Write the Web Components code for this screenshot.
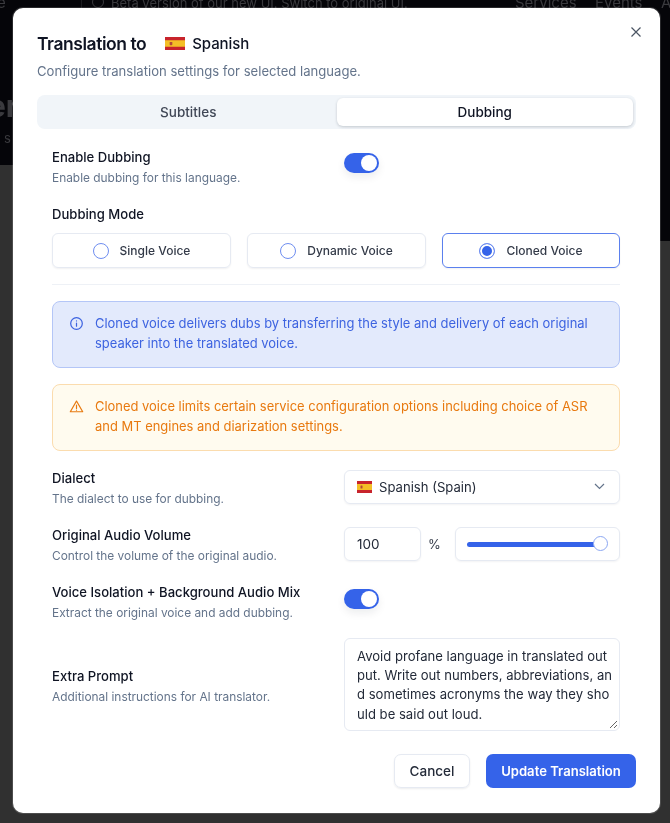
<!DOCTYPE html>
<html>
<head>
<meta charset="utf-8">
<title>Translation</title>
<style>
  html, body { margin: 0; height: 823px; overflow: hidden; background: #303030; }
  body { font-family: Inter, "Liberation Sans", sans-serif; padding: 7.5px 0 0 13px; box-sizing: border-box; }
</style>
</head>
<body>
<page-backdrop></page-backdrop>
<translation-modal>
  <span slot="lang">Spanish</span>
  <tab-switch></tab-switch>
  <form-row label="Enable Dubbing" desc="Enable dubbing for this language."><toggle-switch></toggle-switch></form-row>
  <mode-picker></mode-picker>
  <notice-box kind="info">Cloned voice delivers dubs by transferring the style and delivery of each original speaker into the translated voice.</notice-box>
  <notice-box kind="warn">Cloned voice limits certain service configuration options including choice of ASR and MT engines and diarization settings.</notice-box>
  <form-row label="Dialect" desc="The dialect to use for dubbing." style="margin-top:19px;--text-top:-.5px"><dialect-select></dialect-select></form-row>
  <form-row label="Original Audio Volume" desc="Control the volume of the original audio." style="margin-top:19.5px;--text-top:-.5px"><volume-control></volume-control></form-row>
  <form-row label="Voice Isolation + Background Audio Mix" desc="Extract the original voice and add dubbing." style="margin-top:19.5px;--text-top:-.5px"><toggle-switch></toggle-switch></form-row>
  <form-row label="Extra Prompt" desc="Additional instructions for AI translator." style="margin-top:16.5px;--text-top:29.5px"><prompt-box>Avoid profane language in translated output. Write out numbers, abbreviations, and sometimes acronyms the way they should be said out loud.</prompt-box></form-row>
  <modal-actions></modal-actions>
</translation-modal>

<script>
const flag = (w, h) => `<svg width="${w}" height="${h}" viewBox="0 0 30 20" preserveAspectRatio="none" style="display:block;flex:none">
  <rect width="30" height="20" fill="#c8242c"/><rect y="5" width="30" height="10" fill="#f4bf26"/>
  <rect x="7" y="7.5" width="4" height="5" rx="1" fill="#b5483a"/></svg>`;

class PageBackdrop extends HTMLElement {
  constructor() {
    super();
    this.attachShadow({ mode: "open" }).innerHTML = `
    <style>
      :host { position: fixed; inset: 0; display: block; overflow: hidden; background: #303030; }
      .top { position: absolute; left: 0; right: 0; top: 0; height: 165px; background: #050509; }
      .right { position: absolute; right: 0; top: 165px; width: 20px; height: 76px; background: #050509; }
      .line { position: absolute; left: 81px; top: 0; width: 1px; height: 8px; background: #1b1b1f; }
      .dot { position: absolute; left: 92px; top: -4px; width: 10px; height: 10px; border: 1px solid #3a3a3e; border-radius: 50%; }
      span { position: absolute; color: #3a3a3e; font: 400 13px/16px Inter, sans-serif; white-space: nowrap; filter: blur(.4px); }
      .nav { font-size: 15px; }
      .big { font: 700 30px/36px Inter, sans-serif; }
    </style>
    <div class="top"></div><div class="right"></div><div class="line"></div><div class="dot"></div>
    <span class="nav" style="left:-3px;top:-5px">e</span>
    <span style="left:111px;top:-5px">Beta version of our new UI. Switch to original UI.</span>
    <span class="nav" style="left:515px;top:-5px">Services</span>
    <span class="nav" style="left:595px;top:-5px">Events</span>
    <span class="nav" style="left:661px;top:-5px">A</span>
    <span class="big" style="left:-12px;top:88px">er</span>
    <span style="left:4px;top:130px">s</span>`;
  }
}

class TranslationModal extends HTMLElement {
  constructor() {
    super();
    this.attachShadow({ mode: "open" }).innerHTML = `
    <style>
      :host { position: relative; display: block; width: 647px; height: 805px; box-sizing: border-box;
        background: #fff; border-radius: 10px; padding: 24px 24px 0; color: #0f1423;
        box-shadow: 0 0 0 1px rgba(255,255,255,.14); }
      h2 { margin: 0; display: flex; align-items: center; height: 24px; font-size: 17.5px; font-weight: 600; letter-spacing: -.45px; }
      h2 svg { margin: 0 7px 0 19px; }
      h2 ::slotted(span) { font-size: 15px; font-weight: 500; letter-spacing: -.1px; }
      p { margin: 6.5px 0 15px; font-size: 13.1px; line-height: 18px; color: #64748b; }
      .x { position: absolute; right: 18px; top: 18.5px; width: 12px; height: 12px; }
    </style>
    <svg class="x" viewBox="0 0 12 12" fill="none" stroke="#4b5563" stroke-width="1.2"><path d="M1.5 1.5l9 9M10.5 1.5l-9 9"/></svg>
    <h2>Translation to ${flag(20, 13)}<slot name="lang"></slot></h2>
    <p>Configure translation settings for selected language.</p>
    <slot></slot>`;
  }
}

class TabSwitch extends HTMLElement {
  constructor() {
    super();
    this.attachShadow({ mode: "open" }).innerHTML = `
    <style>
      :host { display: grid; grid-template-columns: 1fr 1fr; height: 34px; box-sizing: border-box; padding: 3px; margin-bottom: 19px;
        background: #f1f5f9; border-radius: 8px; font-size: 13.5px; font-weight: 500; color: #404756; text-align: center; line-height: 28px; }
      .on { background: #fff; border-radius: 6px; color: #0f1423; box-shadow: 0 1px 3px rgba(15,23,42,.2); }
    </style>
    <div>Subtitles</div><div class="on">Dubbing</div>`;
  }
}

class FormRow extends HTMLElement {
  constructor() {
    super();
    this.attachShadow({ mode: "open" }).innerHTML = `
    <style>
      :host { display: grid; grid-template-columns: 292px 276px; align-items: start; margin-left: 15px; }
      .t { margin-top: var(--text-top, 0); }
      .l { font-size: 13.1px; font-weight: 500; line-height: 18px; color: #0f1423; white-space: nowrap; }
      .d { font-size: 11.9px; line-height: 16px; margin-top: 4px; color: #64748b; white-space: nowrap; }
    </style>
    <div class="t"><div class="l"></div><div class="d"></div></div>
    <slot></slot>`;
    this.shadowRoot.querySelector(".l").textContent = this.getAttribute("label");
    this.shadowRoot.querySelector(".d").textContent = this.getAttribute("desc");
  }
}

class ToggleSwitch extends HTMLElement {
  constructor() {
    super();
    this.attachShadow({ mode: "open" }).innerHTML = `
    <style>
      :host { display: block; width: 35px; height: 20px; margin-top: 5px; border-radius: 10px; background: #3563e9; position: relative;
        box-shadow: 0 4px 8px rgba(15,23,42,.08); }
      i { position: absolute; right: 2px; top: 2px; width: 16px; height: 16px; border-radius: 50%; background: #fff; }
    </style><i></i>`;
  }
}

class ModePicker extends HTMLElement {
  constructor() {
    super();
    const card = (t, on) => `<div class="c ${on ? "on" : ""}"><i></i>${t}</div>`;
    this.attachShadow({ mode: "open" }).innerHTML = `
    <style>
      :host { display: block; margin: 19px 16px 15.5px 15px; }
      .t { font-size: 13.1px; font-weight: 500; line-height: 18px; color: #0f1423; margin-bottom: 10px; }
      .g { display: grid; grid-template-columns: 179px 179px 178px; gap: 16px; padding-bottom: 16px; border-bottom: 1px solid #eef1f6; }
      .c { height: 35px; box-sizing: border-box; display: flex; align-items: center; justify-content: center; gap: 11px;
        border: 1px solid #e6eaf2; border-radius: 6px; font-size: 12px; font-weight: 500; color: #333a48; box-shadow: 0 1px 2px rgba(15,23,42,.06); }
      .c i { width: 16px; height: 16px; box-sizing: border-box; border-radius: 50%; border: 1.5px solid #6f8ef0; background: #fff; }
      .on { border: 1.5px solid #5b80ee; }
      .on i { background: #3563e9; box-shadow: inset 0 0 0 2px #fff; }
    </style>
    <div class="t">Dubbing Mode</div>
    <div class="g">${card("Single Voice")}${card("Dynamic Voice")}${card("Cloned Voice", true)}</div>`;
  }
}

class NoticeBox extends HTMLElement {
  constructor() {
    super();
    const info = this.getAttribute("kind") === "info";
    const icon = info
      ? `<svg viewBox="0 0 16 16" fill="none" stroke="currentColor" stroke-width="1.3" stroke-linecap="round"><circle cx="8" cy="8" r="6.2"/><path d="M8 7.6v3.2M8 5.2v.1"/></svg>`
      : `<svg viewBox="0 0 16 16" fill="none" stroke="currentColor" stroke-width="1.3" stroke-linecap="round" stroke-linejoin="round"><path d="M8 2.2L14.6 13.6H1.4z"/><path d="M8 6.6v3.4M8 11.8v.1"/></svg>`;
    this.attachShadow({ mode: "open" }).innerHTML = `
    <style>
      :host { display: flex; gap: 11px; height: 67px; box-sizing: border-box; margin: 0 16px 16px 15px; padding: 12.5px 16px;
        border-radius: 8px; font-size: 12.95px; line-height: 19.5px; border: 1px solid ${info ? "#b4c6f7" : "#fbdcae"};
        background: ${info ? "#e3eafc" : "#fffbef"}; color: ${info ? "#3d63e0" : "#e8790f"}; }
      svg { width: 15px; height: 15px; flex: none; margin-top: 2px; }
      :host(:last-of-type) { margin-bottom: 0; }
    </style>${icon}<div><slot></slot></div>`;
  }
}

class DialectSelect extends HTMLElement {
  constructor() {
    super();
    this.attachShadow({ mode: "open" }).innerHTML = `
    <style>
      :host { display: flex; align-items: center; gap: 7px; height: 34px; box-sizing: border-box; padding: 0 14px 0 12px;
        border: 1px solid #e6eaf2; border-radius: 6px; font-size: 13.1px; color: #232a38; box-shadow: 0 1px 2px rgba(15,23,42,.05); }
      span { flex: 1; }
      .c { width: 11px; height: 7px; }
    </style>
    ${flag(15, 12)}<span>Spanish (Spain)</span>
    <svg class="c" viewBox="0 0 11 7" fill="none" stroke="#64748b" stroke-width="1.2"><path d="M1 1l4.5 4.5L10 1"/></svg>`;
  }
}

class VolumeControl extends HTMLElement {
  constructor() {
    super();
    this.attachShadow({ mode: "open" }).innerHTML = `
    <style>
      :host { display: flex; align-items: center; height: 34px; font-size: 13.5px; color: #232a38; }
      .n, .s { height: 34px; box-sizing: border-box; border: 1px solid #e6eaf2; border-radius: 6px; box-shadow: 0 1px 2px rgba(15,23,42,.05); }
      .n { width: 77px; padding-left: 12px; line-height: 32px; }
      .p { width: 34px; padding-left: 7px; box-sizing: border-box; color: #333a48; font-size: 13px; }
      .s { width: 165px; position: relative; }
      .s b { position: absolute; left: 11px; right: 20px; top: 14px; height: 5px; border-radius: 3px; background: #3563e9; }
      .s i { position: absolute; right: 11px; top: 8.5px; width: 15px; height: 15px; box-sizing: border-box; border-radius: 50%; background: #fff; border: 1.2px solid #8da8f2; }
    </style>
    <div class="n">100</div><div class="p">%</div><div class="s"><b></b><i></i></div>`;
  }
}

class PromptBox extends HTMLElement {
  constructor() {
    super();
    this.attachShadow({ mode: "open" }).innerHTML = `
    <style>
      :host { display: block; position: relative; height: 93px; box-sizing: border-box; padding: 8px 6px 8px 12px;
        border: 1px solid #e6eaf2; border-radius: 6px; font-size: 13.1px; line-height: 19.4px; color: #232a38; word-break: break-all; }
      svg { position: absolute; right: 1px; bottom: 1px; width: 9px; height: 9px; }
    </style><slot></slot>
    <svg viewBox="0 0 9 9" fill="none" stroke="#555" stroke-width=".9"><path d="M1 8l7-7M5 8l3-3"/></svg>`;
  }
}

class ModalActions extends HTMLElement {
  constructor() {
    super();
    this.attachShadow({ mode: "open" }).innerHTML = `
    <style>
      :host { display: flex; justify-content: flex-end; gap: 16px; margin-top: 23.5px; font-size: 13.5px; font-weight: 500; }
      div { height: 34px; line-height: 34px; box-sizing: border-box; border-radius: 7px; text-align: center; }
      .c { width: 76px; line-height: 32px; border: 1px solid #e6eaf2; color: #232a38; box-shadow: 0 1px 2px rgba(15,23,42,.08); }
      .u { width: 150px; background: #3563e9; color: #fff; font-size: 13.1px; font-weight: 600; }
    </style><div class="c">Cancel</div><div class="u">Update Translation</div>`;
  }
}

customElements.define("page-backdrop", PageBackdrop);
customElements.define("translation-modal", TranslationModal);
customElements.define("tab-switch", TabSwitch);
customElements.define("form-row", FormRow);
customElements.define("toggle-switch", ToggleSwitch);
customElements.define("mode-picker", ModePicker);
customElements.define("notice-box", NoticeBox);
customElements.define("dialect-select", DialectSelect);
customElements.define("volume-control", VolumeControl);
customElements.define("prompt-box", PromptBox);
customElements.define("modal-actions", ModalActions);
</script>
</body>
</html>
